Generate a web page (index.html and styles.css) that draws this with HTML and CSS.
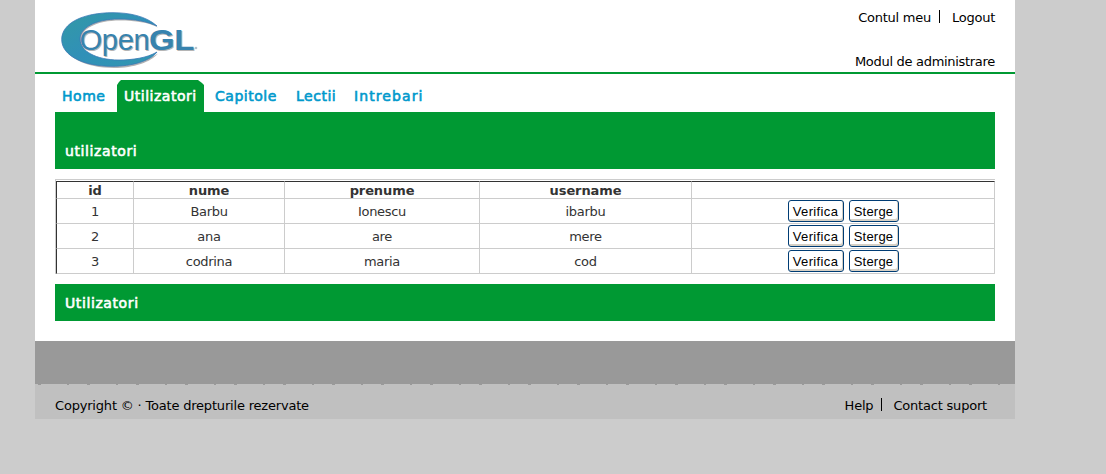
FILE: index.html
```html
<!DOCTYPE html>
<html lang="ro">
<head>
<meta charset="utf-8">
<title>Utilizatori</title>
<link rel="stylesheet" href="styles.css">
</head>
<body>
<div class="page">
  <header class="header">
    <svg class="logo" width="140" height="60" viewBox="60 10 140 60" role="img" aria-label="OpenGL">
      <defs>
        <linearGradient id="crescent" x1="0" y1="0" x2="1" y2="1">
          <stop offset="0" stop-color="#3399a5"/>
          <stop offset=".5" stop-color="#3090b8"/>
          <stop offset="1" stop-color="#3298b0"/>
        </linearGradient>
      </defs>
      <path d="M158 27.500C147 17 130 14 114 14C84 14 63 24 63 40.500C63 57 86 68 114 68C134 68 151 62 158 53.500C148 60 134 62 120 62C97 62 81 53 81 40C81 29 96 20.500 120 20.500C136 20.500 148 22.500 158 27.500Z" fill="#b3b3b3"/>
      <path d="M157 26C146 16 129 12.700 113 12.700C83 12.700 61.700 23 61.700 39.500C61.700 56 84 66.300 112 66.300C132 66.300 150 61 157 52C147 58 132 60 119 60C96 60 80 51 80 39C80 28 95 19 119 19C135 19 147 21.500 157 26Z" fill="url(#crescent)" stroke="#3978b5" stroke-width=".8"/>
      <g class="logo-shadow">
        <text x="80.500" y="51.200" textLength="70" lengthAdjust="spacingAndGlyphs" class="logo-open">Open</text>
        <text x="150" y="51.200" textLength="45" lengthAdjust="spacingAndGlyphs" class="logo-gl">GL</text>
      </g>
      <g class="logo-face">
        <text x="79.500" y="50" textLength="70" lengthAdjust="spacingAndGlyphs" class="logo-open">Open</text>
        <text x="149" y="50" textLength="45" lengthAdjust="spacingAndGlyphs" class="logo-gl">GL</text>
      </g>
      <circle cx="196" cy="48" r="1.300" fill="#b9c4cc"/>
    </svg>
    <div class="account">
      <div class="links"><a>Contul meu</a><i class="sep"></i><a>Logout</a></div>
      <div class="module">Modul de administrare</div>
    </div>
  </header>
  <nav class="nav">
    <a class="tab tab-home">Home</a>
    <a class="tab active">Utilizatori</a>
    <a class="tab tab-capitole">Capitole</a>
    <a class="tab tab-lectii">Lectii</a>
    <a class="tab tab-intrebari">Intrebari</a>
  </nav>
  <main class="content">
    <h1 class="bar bar-top">utilizatori</h1>
    <table class="users">
      <colgroup><col class="c-id"><col class="c-nume"><col class="c-prenume"><col class="c-user"><col class="c-act"></colgroup>
      <thead><tr><th>id</th><th>nume</th><th>prenume</th><th>username</th><th></th></tr></thead>
      <tbody>
        <tr><td>1</td><td>Barbu</td><td>Ionescu</td><td>ibarbu</td><td class="act"><div class="actions"><button class="btn verifica">Verifica</button><button class="btn sterge">Sterge</button></div></td></tr>
        <tr><td>2</td><td>ana</td><td>are</td><td>mere</td><td class="act"><div class="actions"><button class="btn verifica">Verifica</button><button class="btn sterge">Sterge</button></div></td></tr>
        <tr><td>3</td><td>codrina</td><td>maria</td><td>cod</td><td class="act"><div class="actions"><button class="btn verifica">Verifica</button><button class="btn sterge">Sterge</button></div></td></tr>
      </tbody>
    </table>
    <h2 class="bar">Utilizatori</h2>
  </main>
  <div class="band"></div>
  <footer class="footer">
    <span>Copyright © · Toate drepturile rezervate</span>
    <div class="links"><a>Help</a><i class="sep"></i><a>Contact suport</a></div>
  </footer>
</div>
</body>
</html>
```
FILE: styles.css
```css
* { box-sizing: border-box; }
body {
  margin: 0;
  height: 474px;
  overflow: hidden;
  background: #ccc;
  color: #000;
  font: 13px/16px "DejaVu Sans", sans-serif;
  letter-spacing: -0.3px;
}
.page { width: 980px; margin-left: 35px; background: #fff; }

.header {
  display: flex;
  justify-content: space-between;
  height: 74px;
  padding: 10px 20px 0 25px;
  border-bottom: 2px solid #093;
}
.logo { display: block; }
.logo-open { font: 29px "Liberation Sans", sans-serif; }
.logo-gl { font: bold 30px "Liberation Sans", sans-serif; }
.logo-shadow { fill: #b5b5b5; }
.logo-face { fill: #3783ae; }
.account { text-align: right; white-space: nowrap; }
.links { display: flex; justify-content: flex-end; white-space: nowrap; letter-spacing: -0.2px; }
.sep { width: 1px; height: 13px; margin: 0 12px 0 8px; background: #000; }
.account .links { letter-spacing: -0.25px; }
.footer .sep { margin-right: 11px; }
.module { margin-top: 28px; }

.nav { display: flex; height: 38px; padding: 6px 0 0 20px; }
.tab {
  height: 32px;
  padding: 0 7px;
  font-size: 14px;
  line-height: 32px;
  letter-spacing: 0.52px;
  color: #09c;
  -webkit-text-stroke: 0.6px currentColor;
  white-space: nowrap;
}
.tab-home { width: 62px; }
.active {
  width: 87px;
  margin-right: 4px;
  background: #093;
  color: #fff;
  clip-path: polygon(0 5px, 2px 2px, 4px 0, 81px 0, 85px 3px, 87px 5px, 87px 100%, 0 100%);
}
.tab-capitole { width: 81px; }
.tab-lectii { width: 58px; }
.tab-intrebari { letter-spacing: 1.1px; }

.content { padding: 0 20px 20px; }
.bar {
  height: 37px;
  margin: 0;
  padding: 1px 10px 0;
  background: #093;
  color: #fff;
  font-size: 14px;
  font-weight: normal;
  line-height: 37px;
  letter-spacing: 0.6px;
  -webkit-text-stroke: 0.6px currentColor;
}
.bar-top { height: 57px; padding-top: 21px; }

.users {
  width: 940px;
  margin: 10px 0;
  padding-top: 1px;
  table-layout: fixed;
  border-collapse: separate;
  border-spacing: 0;
  border: solid #ccc;
  border-width: 1px 0 0 1px;
  color: #333;
  text-align: center;
}
.c-id { width: 78px; }
.c-nume { width: 151px; }
.c-prenume { width: 195px; }
.c-user { width: 212px; }
.c-act { width: 303px; }
.users th, .users td {
  height: 25px;
  padding: 2px 0 0;
  border: solid #ccc;
  border-width: 0 1px 1px 0;
  line-height: 16px;
}
.users th {
  height: 18px;
  padding: 1px 0 0;
  border-top: 1px solid #333;
  line-height: 15px;
  letter-spacing: -0.1px;
}
.users tr > :first-child { border-left: 1px solid #333; }
.users .act { padding: 0; }
.actions { display: flex; justify-content: center; gap: 5px; }
.btn {
  height: 22px;
  padding: 2px 0 0;
  border: 1px solid #003c74;
  border-radius: 3px;
  background: #fff;
  box-shadow: inset -1px -2px 0 #d6d0c5;
  color: #000;
  font: 13px/18px "Liberation Sans", sans-serif;
  text-align: center;
}
.verifica { width: 56px; letter-spacing: 0.35px; }
.sterge { width: 50px; letter-spacing: 0.2px; }

.band { height: 43px; background: #999; }
.footer {
  display: flex;
  justify-content: space-between;
  height: 35px;
  padding: 14px 28px 0 20px;
  letter-spacing: -0.19px;
  background:
    repeating-linear-gradient(90deg, transparent 0 3px, #999 3px 6px, transparent 6px 32px, #999 32px 34px, transparent 34px 49px) 0 0 / 100% 1px no-repeat,
    #c0c0c0;
}
```
